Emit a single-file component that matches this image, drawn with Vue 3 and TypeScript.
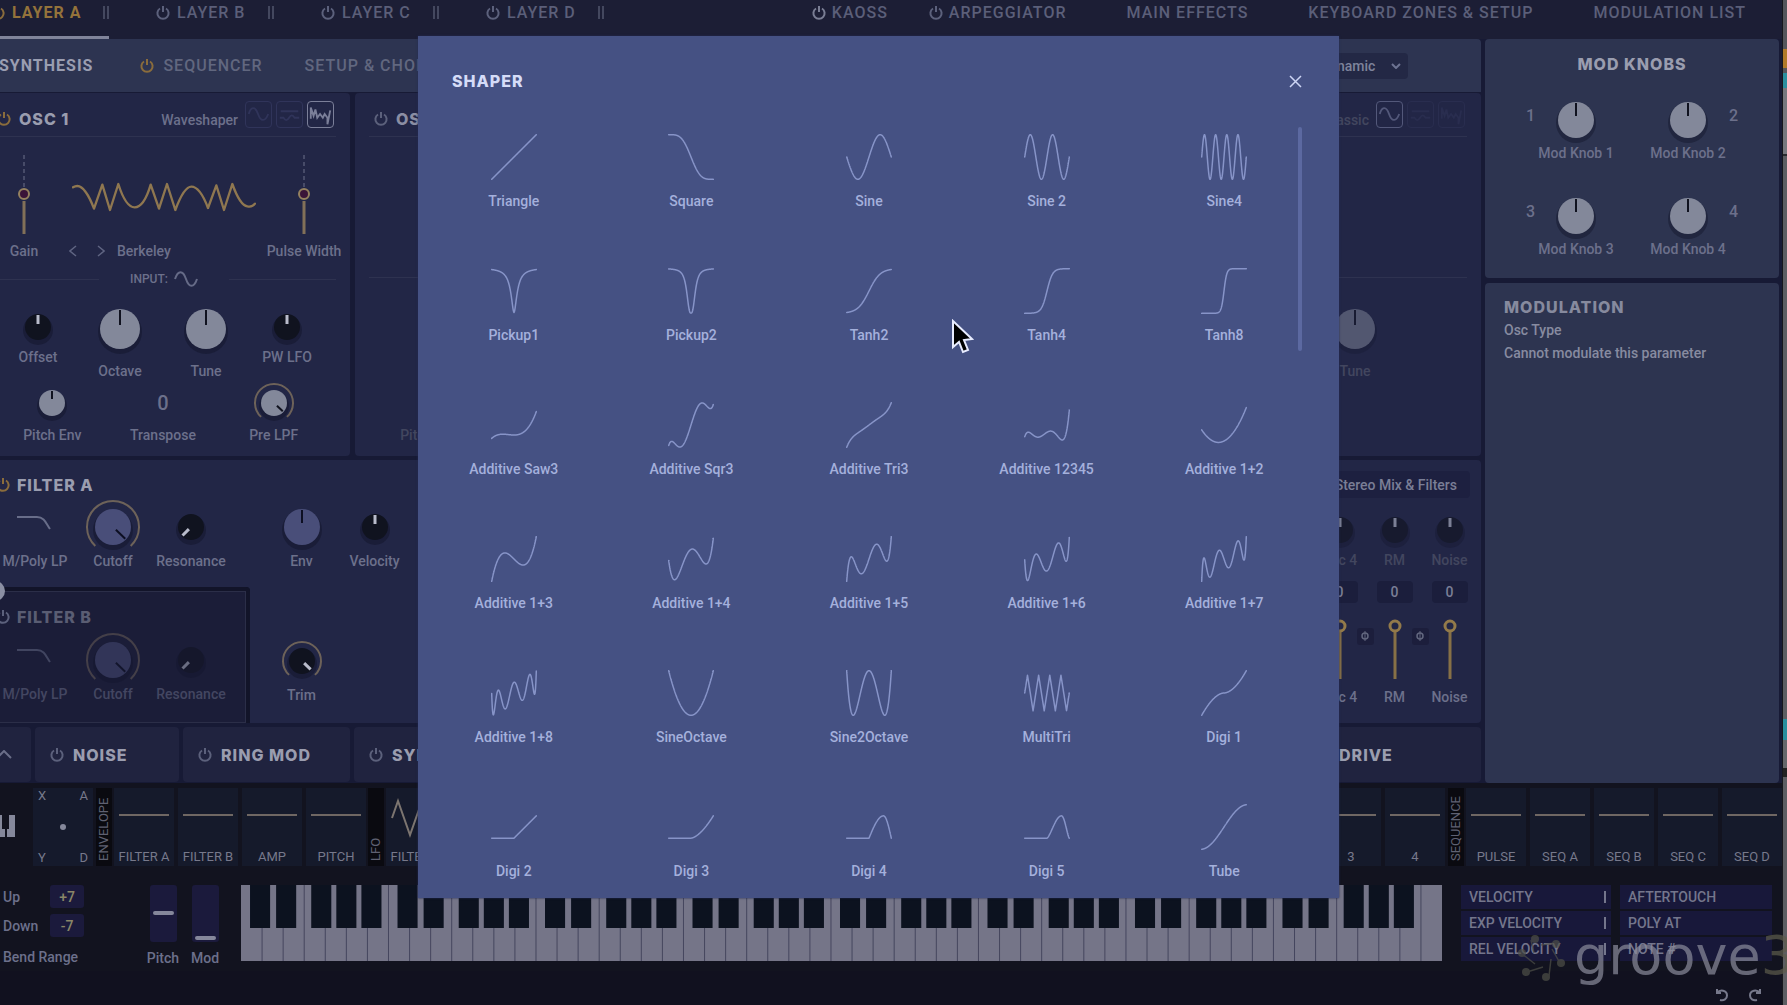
<script setup lang="ts">
import { h, type FunctionalComponent } from 'vue'

type Tone = 'light' | 'dark' | 'violet'
interface KnobProps { r: number; box: number; tone: Tone; turn?: number; ring?: number; label: string }

const tones: Record<Tone, { face: string; mark: string }> = {
  light: { face: '#83889a', mark: '#10121f' },
  dark: { face: '#10131f', mark: '#b9bccb' },
  violet: { face: '#494e79', mark: '#0d0f22' },
}

const Knob: FunctionalComponent<KnobProps> = (p) => {
  const { face, mark } = tones[p.tone]
  const a = p.ring ? p.ring * 0.68 : 0
  const b = p.ring ? p.ring * 0.73 : 0
  return h('svg', {
    width: p.box, height: p.box, viewBox: `${-p.box / 2} ${-p.box / 2} ${p.box} ${p.box}`,
    overflow: 'visible', role: 'slider', 'aria-label': p.label, 'aria-valuenow': p.turn ?? 0,
  }, [
    h('circle', { cy: 3, r: p.r + 2, fill: '#0b0d20', 'fill-opacity': 0.35 }),
    h('circle', { r: p.r, fill: face }),
    p.ring ? h('path', { d: `M${-a} ${b}A${p.ring} ${p.ring} 0 1 1 ${a} ${b}`, fill: 'none', stroke: '#6d6259', 'stroke-width': 2 }) : null,
    h('path', { d: `M0 ${-p.r + 1}V${p.tone === 'dark' ? -3 : -4}`, stroke: mark, 'stroke-width': p.tone === 'dark' ? 3 : 2, transform: `rotate(${p.turn ?? 0})` }),
  ])
}
Knob.props = ['r', 'box', 'tone', 'turn', 'ring', 'label']

const Power: FunctionalComponent<{ color: string }> = (p) =>
  h('svg', { width: 14, height: 16, viewBox: '0 0 14 16', 'aria-hidden': 'true', fill: 'none', stroke: p.color, 'stroke-width': 2 }, [
    h('path', { d: 'M4 3.5A5.6 5.6 0 1 0 10 3.5M7 1V7' }),
  ])
Power.props = ['color']

const dim = '#5c617c'
const amber = '#8a6c3c'

const layers = ['LAYER A', 'LAYER B', 'LAYER C', 'LAYER D']
const pages = ['MAIN EFFECTS', 'KEYBOARD ZONES & SETUP', 'MODULATION LIST']

const boxIcons = [
  'M3 13C5 5 10 4 13 13C16 22 21 21 24 13',
  'M3 17H7Q10 22 13 17T19 17H24M4 10H23',
  'M3 18V6L6 15L8 8L10 17L13 13L16 17L18 13L21 17V24L24 9',
]
const oscs = [
  { name: 'OSC 1', type: 'Waveshaper', active: 2 },
  { name: 'OSC 2', type: 'Classic', active: 0 },
  { name: 'OSC 3', type: 'Classic', active: 0 },
  { name: 'OSC 4', type: 'Classic', active: 0 },
]
const filters = [
  { name: 'FILTER A', on: true },
  { name: 'FILTER B', on: false },
]
const mixColumns = ['Osc 4', 'RM', 'Noise']
const envelopes = ['FILTER A', 'FILTER B', 'AMP', 'PITCH']
const sequences = ['PULSE', 'SEQ A', 'SEQ B', 'SEQ C', 'SEQ D']
const sources = ['VELOCITY', 'AFTERTOUCH', 'EXP VELOCITY', 'POLY AT', 'REL VELOCITY', 'NOTE #']

const blackKeys = Array.from({ length: 8 }, (_, o) => [9, 35, 70, 95, 120].map((x) => o * 147 + x)).flat()

/* Transfer curves over x in [-1, 1] */
type Curve = (x: number) => number
const cheb = (n: number, x: number) => Math.cos(n * Math.acos(Math.max(-1, Math.min(1, x))))
const plus = (n: number): Curve => (x) => (x + cheb(n, x)) / 2
const tri = (x: number) => (2 / Math.PI) * Math.asin(Math.sin(x))
/* Half-cycle hump from x = start to 1, with its peak at x = 0.65 */
const hump = (x: number, start: number) => {
  if (x <= start) return 0
  const u = x < 0.65 ? (x - start) / (0.65 - start) / 2 : 0.5 + (x - 0.65) / 0.7
  return Math.max(0, Math.sin(Math.PI * u))
}
const curves: [string, Curve][] = [
  ['Triangle', (x) => x],
  ['Square', (x) => -Math.sin((Math.PI / 2) * Math.sin((Math.PI / 2) * x))],
  ['Sine', (x) => Math.sin(Math.PI * x)],
  ['Sine 2', (x) => Math.sin(2 * Math.PI * x)],
  ['Sine4', (x) => Math.sin(4 * Math.PI * x)],
  ['Pickup1', (x) => 1 - 2 / (1 + Math.pow(6 * Math.abs(x), 1.8))],
  ['Pickup2', (x) => 1 - 2 / (1 + Math.pow(5 * Math.abs(x), 2.8))],
  ['Tanh2', (x) => Math.tanh(2 * x)],
  ['Tanh4', (x) => Math.tanh(4 * x)],
  ['Tanh8', (x) => Math.tanh(8 * x)],
  ['Additive Saw3', (x) => 0.45 * (x + cheb(2, x) / 2 + cheb(3, x) / 3)],
  ['Additive Sqr3', (x) => 1.06 * (x - cheb(3, x) / 3 + cheb(5, x) / 5)],
  ['Additive Tri3', (x) => 0.87 * (x + cheb(3, x) / 9 + cheb(5, x) / 25)],
  ['Additive 12345', (x) => 0.2 * (x + cheb(2, x) + cheb(3, x) + cheb(4, x) + cheb(5, x))],
  ['Additive 1+2', plus(2)],
  ['Additive 1+3', plus(3)],
  ['Additive 1+4', plus(4)],
  ['Additive 1+5', plus(5)],
  ['Additive 1+6', plus(6)],
  ['Additive 1+7', plus(7)],
  ['Additive 1+8', plus(8)],
  ['SineOctave', (x) => cheb(2, x)],
  ['Sine2Octave', (x) => cheb(4, x)],
  ['MultiTri', (x) => 0.8 * tri(4 * Math.PI * x)],
  ['Digi 1', (x) => Math.sign(x) * Math.pow(Math.abs(x), 1.8)],
  ['Digi 2', (x) => Math.max(0, x)],
  ['Digi 3', (x) => Math.pow(Math.max(0, x), 1.6)],
  ['Digi 4', (x) => hump(x, 0)],
  ['Digi 5', (x) => Math.pow(hump(x, 0), 1.4)],
  ['Tube', (x) => Math.sin((Math.PI / 2) * x * 0.96)],
]
const shapes = curves.map(([name, f]) => {
  const n = 400
  const pts = Array.from({ length: n + 1 }, (_, i) => {
    const x = -Math.cos((Math.PI * i) / n)
    return [x, f(x)] as const
  })
  const ys = pts.map((p) => p[1])
  const mid = (Math.max(...ys) + Math.min(...ys)) / 2
  return { name, points: pts.map(([x, y]) => `${(x * 22.3 + 23).toFixed(2)},${(23 - (y - mid) * 22.3).toFixed(2)}`).join(' ') }
})
</script>

<template>
  <div class="screen">
    <div class="app">
      <header class="top">
        <nav class="layers" aria-label="Layers">
          <button v-for="(l, i) in layers" :key="l" class="layer caps" :class="{ active: i === 0 }">
            <Power :color="i === 0 ? amber : dim" /><span>{{ l }}</span><i class="grip"></i>
          </button>
        </nav>
        <nav class="pages" aria-label="Pages">
          <span class="fx">
            <button class="caps page"><Power color="#7a7e94" />KAOSS</button>
            <button class="caps page"><Power :color="dim" />ARPEGGIATOR</button>
          </span>
          <button v-for="p in pages" :key="p" class="caps page">{{ p }}</button>
        </nav>
      </header>

      <main class="body">
        <div class="left">
          <div class="tabs">
            <button class="caps tab current">SYNTHESIS</button>
            <button class="caps tab"><Power :color="amber" />SEQUENCER</button>
            <button class="caps tab">SETUP &amp; CHORDS</button>
            <span class="voice">
              <select aria-label="Voice assignment"><option>Dynamic</option></select>
              <svg width="10" height="6" viewBox="0 0 10 6" fill="none" stroke="#6d7392" stroke-width="2"><path d="M1 1L5 5L9 1" /></svg>
            </span>
          </div>

          <div class="oscs">
            <section v-for="(o, i) in oscs" :key="o.name" class="panel osc" :class="{ off: i > 0 }">
              <header class="osc-head">
                <Power :color="i === 0 ? amber : dim" />
                <h2 class="title">{{ o.name }}</h2>
                <span class="osc-type">{{ o.type }}</span>
                <span class="boxes">
                  <button v-for="(d, k) in boxIcons" :key="k" class="box" :class="{ on: k === o.active }" :aria-label="`Type ${k + 1}`">
                    <svg width="25" height="25" viewBox="0 0 27 27" fill="none" stroke="currentColor" stroke-width="2"><path :d="d" /></svg>
                  </button>
                </span>
              </header>

              <template v-if="i === 0">
                <div class="wave-row">
                  <svg class="side" width="64" height="80" viewBox="0 0 64 80" fill="none" role="slider" aria-label="Gain" aria-valuenow="50">
                    <path d="M32 0V33" stroke="#474b68" stroke-width="2" stroke-dasharray="4 3" /><path d="M32 46V79" stroke="#827058" stroke-width="3" />
                    <circle cx="32" cy="39" r="5" fill="#3a1438" stroke="#94805f" stroke-width="2" />
                  </svg>
                  <svg class="mid" width="184" height="30" viewBox="214 542 552 90" fill="none" stroke="#8f7750" stroke-width="7" stroke-linejoin="round" stroke-linecap="round">
                    <path d="M217 558Q237 545 255 572Q268 590 280 622L305 550L328 626L353 548Q375 618 402 618Q430 618 450 550L475 622L499 548L524 626Q550 556 572 556Q598 556 622 620L647 552L670 626L695 548Q718 612 740 615Q755 618 763 607" />
                  </svg>
                  <svg class="side" width="64" height="80" viewBox="0 0 64 80" fill="none" role="slider" aria-label="Pulse Width" aria-valuenow="50">
                    <path d="M32 0V33" stroke="#474b68" stroke-width="2" stroke-dasharray="4 3" /><path d="M32 46V79" stroke="#827058" stroke-width="3" />
                    <circle cx="32" cy="39" r="5" fill="#3a1438" stroke="#94805f" stroke-width="2" />
                  </svg>
                </div>
                <div class="name-row">
                  <span class="side">Gain</span>
                  <span class="picker">
                    <svg width="36" height="12" viewBox="0 0 36 12" fill="none" stroke="#5f6482" stroke-width="1.5"><path d="M7 1L1 6L7 11M29 1L35 6L29 11" /></svg>
                    Berkeley
                  </span>
                  <span class="side">Pulse Width</span>
                </div>
                <div class="input-row">
                  <hr /><span>INPUT:</span>
                  <svg width="24" height="16" viewBox="0 0 24 16" fill="none" stroke="#666b87" stroke-width="2"><path d="M1 8C4 -1 9 -1 12 8C15 17 20 17 23 8" /></svg>
                  <hr />
                </div>
                <div class="knobs-a">
                  <div class="cell"><Knob :r="13" :box="44" tone="dark" label="Offset" /><span>Offset</span></div>
                  <div class="cell"><Knob :r="20" :box="68" tone="light" label="Octave" /><span>Octave</span></div>
                  <div class="cell"><Knob :r="20" :box="68" tone="light" label="Tune" /><span>Tune</span></div>
                  <div class="cell"><Knob :r="13" :box="44" tone="dark" label="PW LFO" /><span>PW LFO</span></div>
                </div>
                <div class="knobs-b">
                  <div class="cell"><Knob :r="13" :box="48" tone="light" label="Pitch Env" /><span>Pitch Env</span></div>
                  <div class="cell"><b class="zero">0</b><span>Transpose</span></div>
                  <div class="cell"><Knob :r="13" :box="48" tone="light" :turn="133" :ring="19" label="Pre LPF" /><span>Pre LPF</span></div>
                </div>
              </template>
              <template v-else>
                <div class="blank"></div>
                <div class="knobs-two">
                  <div class="cell"><Knob :r="20" :box="68" tone="light" label="Octave" /><span>Octave</span></div>
                  <div class="cell"><Knob :r="20" :box="68" tone="light" label="Tune" /><span>Tune</span></div>
                </div>
                <div class="knobs-b">
                  <div class="cell end"><span>Pitch Env</span></div>
                </div>
              </template>
            </section>
          </div>

          <div class="lower">
            <section class="panel filters">
              <div class="filter-col">
                <div v-for="f in filters" :key="f.name" class="filter" :class="{ second: !f.on }">
                  <header class="filter-head"><Power :color="f.on ? amber : dim" /><h2 class="title">{{ f.name }}</h2></header>
                  <div class="filter-cells">
                    <div class="cell">
                      <svg width="52" height="52" viewBox="0 0 52 52" fill="none" stroke="#686d89" stroke-width="2"><path d="M8 16H28C35 16 37 22 41 28" /></svg>
                      <span>M/Poly LP</span>
                    </div>
                    <div class="cell"><Knob :r="18" :box="52" tone="violet" :turn="134" :ring="26" label="Cutoff" /><span>Cutoff</span></div>
                    <div class="cell"><Knob :r="13" :box="52" tone="dark" :turn="225" label="Resonance" /><span>Resonance</span></div>
                  </div>
                </div>
              </div>
              <div class="env-col">
                <div class="env-cells">
                  <div class="cell"><Knob :r="18" :box="52" tone="violet" label="Env" /><span>Env</span></div>
                  <div class="cell"><Knob :r="13" :box="52" tone="dark" label="Velocity" /><span>Velocity</span></div>
                </div>
                <div class="env-cells">
                  <div class="cell"><Knob :r="13" :box="52" tone="dark" :turn="134" :ring="19" label="Trim" /><span>Trim</span></div>
                </div>
              </div>
              <i class="route"></i>
            </section>
            <section class="panel mix">
              <button class="mix-mode">Stereo Mix &amp; Filters</button>
              <div class="mix-cols">
                <div v-for="(m, i) in mixColumns" :key="m" class="mix-col">
                  <div class="mix-knob"><Knob :r="13" :box="44" tone="dark" :label="m + ' pan'" /></div>
                  <span class="faint">{{ m }}</span>
                  <output class="num">0</output>
                  <svg width="54" height="64" viewBox="0 0 54 64" fill="none" overflow="visible" role="slider" :aria-label="m + ' level'" aria-valuenow="100">
                    <path d="M27 16V63" stroke="#877046" stroke-width="3" /><circle cx="27" cy="10" r="5" stroke="#937a4a" stroke-width="3" />
                    <g v-if="i < 2"><rect x="44" y="12" width="17" height="17" rx="3" fill="#1c1e3c" /><circle cx="52" cy="20" r="3" stroke="#62677f" stroke-width="1.5" /><path d="M52 15V25" stroke="#62677f" /></g>
                  </svg>
                  <span>{{ m }}</span>
                </div>
              </div>
            </section>
          </div>

          <div class="modules">
            <section class="panel module caret">
              <svg width="16" height="9" viewBox="0 0 16 9" fill="none" stroke="#6a6e88" stroke-width="2"><path d="M1 8L8 1L15 8" /></svg>
            </section>
            <section class="panel module noise"><Power :color="dim" /><h2 class="title">NOISE</h2></section>
            <section class="panel module ring"><Power :color="dim" /><h2 class="title">RING MOD</h2></section>
            <section class="panel module sync"><Power :color="dim" /><h2 class="title">SYNC</h2></section>
            <section class="panel module drive"><h2 class="title">DRIVE</h2></section>
          </div>
        </div>

        <aside class="right">
          <section class="card mods">
            <h2 class="title">MOD KNOBS</h2>
            <div class="mod-grid">
              <div v-for="n in 4" :key="n" class="mod" :class="{ flip: n % 2 === 0 }">
                <b>{{ n }}</b>
                <div class="cell"><Knob :r="18" :box="50" tone="light" :label="'Mod Knob ' + n" /><span>Mod Knob {{ n }}</span></div>
              </div>
            </div>
          </section>
          <section class="card info">
            <h2 class="title">MODULATION</h2>
            <p>Osc Type</p>
            <p>Cannot modulate this parameter</p>
          </section>
        </aside>
      </main>

      <div class="strip">
        <div class="group">
          <svg class="piano-icon" width="15" height="22" viewBox="0 0 15 22" fill="#85889b"><path d="M0 0H2V14H5V22H0ZM9 0H15V22H7V14H9Z" /></svg>
          <div class="xy"><span>X</span><span>A</span><i></i><span>Y</span><span>D</span></div>
          <div class="vert">ENVELOPE</div>
          <div v-for="e in envelopes" :key="e" class="slot"><i></i><span>{{ e }}</span></div>
          <div class="vert low">LFO</div>
          <div class="slot">
            <svg width="50" height="40" viewBox="0 0 50 40" fill="none" stroke="#7c7570" stroke-width="2"><path d="M1 20L7 3L19 37L31 3L43 37L49 20" /></svg>
            <span>FILTER A</span>
          </div>
        </div>
        <div class="group">
          <div v-for="n in [3, 4]" :key="n" class="slot"><i></i><span>{{ n }}</span></div>
          <div class="vert">SEQUENCE</div>
          <div v-for="s in sequences" :key="s" class="slot"><i></i><span>{{ s }}</span></div>
        </div>
      </div>

      <div class="play">
        <div class="bend">
          <label for="up">Up</label><input id="up" value="+7" />
          <label for="down">Down</label><input id="down" value="-7" />
          <span class="wide">Bend Range</span>
        </div>
        <div class="wheel"><div class="track"><i></i></div>Pitch</div>
        <div class="wheel mod-wheel"><div class="track"><i></i></div>Mod</div>
        <svg class="piano" viewBox="0 0 1197 76" preserveAspectRatio="none" role="img" aria-label="Keyboard">
          <rect width="1197" height="76" fill="#757588" />
          <path v-for="k in 56" :key="k" :d="`M${k * 21} 0V76`" stroke="#45465e" />
          <rect v-for="x in blackKeys" :key="x" :x="x" y="0" width="20" height="43" fill="#0c121f" />
        </svg>
        <div class="sources">
          <button v-for="(s, i) in sources" :key="s">{{ s }}<i v-if="i % 2 === 0"></i></button>
        </div>
      </div>

      <footer class="foot">
        <button aria-label="Undo"><svg width="14" height="14" viewBox="0 0 14 14" fill="none" stroke="#77798b" stroke-width="2"><path d="M2 1V5H6M2 5C5 1 12 2 12 7.500C12 11 9 13 5 12" /></svg></button>
        <button aria-label="Redo"><svg width="14" height="14" viewBox="0 0 14 14" fill="none" stroke="#77798b" stroke-width="2"><path d="M12 1V5H8M12 5C9 1 2 2 2 7.500C2 11 5 13 9 12" /></svg></button>
      </footer>
    </div>
    <div class="edge"></div>

    <div class="brand">
      <svg width="50" height="50" viewBox="0 0 50 50" fill="#4f5048" stroke="#4f5048">
        <g stroke="none"><circle cx="18" cy="8" r="4" /><circle cx="39" cy="13" r="4" /><circle cx="44" cy="32" r="4" /><circle cx="29" cy="46" r="4" /><circle cx="9" cy="41" r="4" /><circle cx="5" cy="22" r="4" /></g>
        <path d="M14 9L17 22M38 12L24 14M43 32L35 18M32 45L34 28M10 41L26 36M4 22L18 33" fill="none" stroke-width="1.5" />
      </svg>
      <span>groove</span><span class="three">3</span>
    </div>

    <div class="dialog" role="dialog" aria-labelledby="dlg">
      <header class="dlg-head">
        <h1 id="dlg" class="title">SHAPER</h1>
        <button aria-label="Close"><svg width="13" height="13" viewBox="0 0 13 13" fill="none" stroke="#cdd5f5" stroke-width="1.500"><path d="M1 1L12 12M12 1L1 12" /></svg></button>
      </header>
      <div class="shapes">
        <button v-for="s in shapes" :key="s.name" class="shape">
          <svg width="46" height="46" viewBox="0 0 46 46" fill="none" stroke="#8794c8" stroke-width="1.500" stroke-linecap="round" stroke-linejoin="round"><polyline :points="s.points" /></svg>
          <span>{{ s.name }}</span>
        </button>
      </div>
      <i class="thumb"></i>
    </div>

    <svg class="pointer" width="23" height="36" viewBox="0 0 23 36" aria-hidden="true">
      <path d="M2 2V28L8 23L12 33L17 31L13 21L21 20Z" fill="#000" stroke="#e8ecff" stroke-width="2" />
    </svg>
  </div>
</template>

<style>
body { margin: 0; background: #11121f; }
</style>

<style scoped>
.screen { position: relative; display: flex; min-height: 100vh; overflow: hidden; font: 500 14px/16px Roboto, sans-serif; color: #6c708b; }
.screen * { box-sizing: border-box; }
button { padding: 0; border: 0; background: none; font: inherit; color: inherit; white-space: nowrap; }
svg { display: block; flex: none; }
.title { margin: 0; font: 800 16px/20px Inter, sans-serif; letter-spacing: 1px; color: #9a9daf; white-space: nowrap; }
.caps { font-size: 16px; line-height: 20px; letter-spacing: 1px; }
.app { flex: 1; min-width: 0; display: flex; flex-direction: column; background: #12131f; overflow: hidden; }
.edge { width: 5px; border-left: 1px solid #17171c; background: linear-gradient(#55565c 0 49px, #b07a2a 49px 68px, #55565c 68px 73px, #2a8f9f 73px 88px, #77787e 88px 154px, #2a2a2e 154px 156px, #5d5e63 156px 719px, #2a8f9f 719px 740px, #66676b 740px 768px, #222 768px 777px, #5d5e63 777px); }

.top { display: flex; justify-content: space-between; height: 39px; background: #1c1e35; color: #5b5f79; }
.layers { display: flex; gap: 47px; margin-left: -9px; }
.layer { display: flex; gap: 7px; align-items: center; width: 118px; padding-bottom: 14px; }
.layer.active { border-bottom: 3px solid #80849a; padding-bottom: 11px; color: #94733b; font-weight: 700; }
.layer span { flex: 1; text-align: left; }
.grip { width: 6px; height: 13px; border: solid #44485f; border-width: 0 2px; }
.pages { display: flex; gap: 60px; padding: 0 36px 14px 0; align-items: center; }
.fx { display: flex; gap: 41px; }
.page { display: flex; gap: 6px; align-items: center; }

.body { display: flex; gap: 4px; height: 744px; background: #171a35; }
.left { flex: 1; min-width: 0; margin-left: -22px; display: flex; flex-direction: column; gap: 4px; }
.tabs { display: flex; align-items: center; height: 53px; margin-bottom: -3px; padding: 0 73px 0 21px; background: #2d3451; border-radius: 0 4px 0 0; color: #61677f; }
.tab { display: flex; gap: 9px; align-items: center; margin-right: 42px; }
.tab.current { margin-right: 47px; color: #9a9eb1; font-weight: 700; }
.voice { display: flex; align-items: center; margin-left: auto; padding-right: 7px; background: #232845; border-radius: 4px; color: #7e839b; }
.voice select { appearance: none; width: 84px; height: 26px; padding: 0 0 0 14px; border: 0; background: none; font: inherit; color: inherit; }

.panel { background: #222646; border-radius: 4px; }
.oscs { display: grid; grid-template-columns: repeat(4, minmax(0, 1fr)); gap: 5px; }
.osc { height: 363px; padding: 0 14px; }
.osc-head { display: flex; align-items: center; height: 44px; padding: 8px 2px 0 5px; border-bottom: 1px solid #2e3250; }
.osc-head .title { margin-left: 8px; }
.osc-type { margin: 2px 7px 0 auto; }
.boxes { display: flex; gap: 4px; align-self: flex-start; }
.box { display: grid; place-items: center; width: 27px; height: 27px; border: 1px solid #30345a; border-radius: 4px; color: #30345a; }
.box.on { border-color: #7b7f99; color: #7b7f99; }
.off .osc-type, .off .cell span { color: #42465f; }
.off .box { border-color: #292d4f; color: #292d4f; }
.off .box.on { border-color: #53587a; color: #53587a; }
.off .cell svg { opacity: .5; }
.off .title { color: #8b8ea3; }
.wave-row { display: flex; justify-content: space-between; padding-top: 18px; height: 102px; }
.wave-row .mid { margin-top: 27px; }
.name-row { display: flex; height: 24px; align-items: center; }
.side { width: 64px; display: flex; justify-content: center; white-space: nowrap; }
.picker { flex: 1; display: flex; align-items: center; gap: 12px; padding-left: 13px; }
.input-row { display: flex; align-items: center; height: 32px; gap: 6px; font-size: 12px; }
hr { flex: 1; margin: 0; border: 0; border-top: 1px solid #2e3250; }
.input-row hr:first-child { margin-right: 25px; }
.input-row hr:last-child { margin-left: 25px; }
.cell { display: flex; flex-direction: column; align-items: center; white-space: nowrap; }
.knobs-a { display: grid; grid-template-columns: 80px 84px 88px 1fr; align-items: center; padding: 0 12px 0 6px; }
.knobs-a .cell:first-child, .knobs-a .cell:last-child { padding-bottom: 4px; }
.knobs-b { display: grid; grid-template-columns: repeat(3, 1fr); padding: 0 7px 0 5px; height: 64px; }
.zero { height: 48px; font: 500 20px/48px Roboto, sans-serif; }
.blank { height: 141px; border-bottom: 1px solid #2e3250; }
.knobs-two { display: grid; grid-template-columns: 120px 120px; justify-content: center; margin-top: 17px; }
.knobs-b .end { justify-content: flex-end; }

.lower { display: grid; grid-template-columns: minmax(0, 1fr) 560px; gap: 4px; }
.filters { position: relative; display: flex; height: 263px; }
.filter-col { width: 272px; display: flex; flex-direction: column; }
.filter { height: 127px; padding-left: 18px; }
.filter-head { display: flex; align-items: center; gap: 7px; height: 41px; padding: 9px 0 0 0; }
.filter-cells { display: grid; grid-template-columns: repeat(3, 78px); }
.filter.second { height: 136px; border: solid #121429; border-width: 4px 4px 0 0; border-radius: 0 4px 0 0; background: #1b1d38; box-shadow: inset 0 0 0 1px #2b2e48; }
.second .filter-head { height: 43px; padding-top: 8px; }
.filter.second .filter-cells, .filter.second .title { opacity: .5; }
.env-col { padding-left: 15px; }
.env-cells { display: grid; grid-template-columns: repeat(2, 73px); padding-top: 41px; height: 134px; }
.route { position: absolute; left: 7px; top: 121px; width: 20px; height: 20px; border-radius: 50%; background: #8b8fa3; }
.mix { height: 263px; padding: 11px 4px 0 0; display: flex; flex-direction: column; align-items: flex-end; }
.mix-mode { height: 27px; margin-right: 7px; padding: 0 13px; border-radius: 4px; background: #1d2040; color: #7a7e96; }
.mix-cols { display: grid; grid-template-columns: repeat(3, 55px); margin-top: 10px; }
.mix-col { display: flex; flex-direction: column; align-items: center; }
.mix-knob { opacity: .6; }
.faint { color: #42465f; }
.num { width: 36px; margin: 13px 0; border-radius: 4px; background: #1b1e3c; line-height: 22px; text-align: center; color: #7a7e96; }
.mix-col > span:last-child { margin-top: 9px; }

.modules { display: flex; gap: 4px; }
.module { display: flex; align-items: center; gap: 9px; height: 55px; padding-left: 15px; background: #20233f; }
.caret { width: 53px; padding-left: 18px; }
.noise { width: 144px; }
.ring { width: 167px; }
.sync { flex: 1; }
.drive { width: 150px; padding-left: 8px; }

.right { width: 294px; margin-right: 3px; display: flex; flex-direction: column; gap: 5px; }
.card { background: #2d3450; border-radius: 4px; }
.mods { height: 239px; padding-top: 15px; text-align: center; }
.mod-grid { display: grid; grid-template-columns: repeat(2, 112px); justify-content: center; gap: 30px 0; margin-top: 21px; }
.mod { position: relative; display: flex; justify-content: center; }
.mod b { position: absolute; left: 6px; top: 13px; font: 500 16px/16px Roboto, sans-serif; }
.mod.flip b { left: auto; right: 6px; }
.info { height: 500px; padding: 14px 19px; color: #878ba0; }
.info .title { color: #868a9e; }
.info p { margin: 5px 0 7px; }

.strip { display: flex; justify-content: space-between; height: 83px; padding-top: 5px; font-weight: 400; font-size: 13px; color: #77798b; }
.group { display: flex; gap: 4px; height: 78px; }
.piano-icon { margin: 27px 14px 0 0; }
.xy { display: grid; grid-template-columns: 1fr 1fr; width: 60px; padding: 0 5px; background: #151a2c; align-content: space-between; align-items: center; text-align: left; }
.xy span:nth-of-type(even) { text-align: right; }
.xy i { grid-column: 1 / 3; justify-self: center; width: 6px; height: 6px; border-radius: 50%; background: #85889b; }
.vert { width: 16px; margin: 0 -2px 0 -1px; padding-top: 5px; background: #0a0a10; writing-mode: vertical-rl; transform: rotate(180deg); line-height: 16px; color: #5f6172; }
.vert.low { margin-left: -2px; }
.slot { width: 60px; display: flex; flex-direction: column; align-items: center; justify-content: flex-end; background: #151a2b; }
.slot i { width: 50px; height: 2px; margin-bottom: 33px; background: #6f6763; }
.slot svg { margin-bottom: 11px; }
.slot span { margin-bottom: 1px; white-space: nowrap; }

.play { display: flex; align-items: flex-start; height: 105px; padding-top: 19px; }
.bend { display: grid; grid-template-columns: 47px 34px; row-gap: 6px; align-items: center; width: 141px; padding-left: 3px; }
.bend input { width: 34px; height: 23px; padding: 0; border: 0; border-radius: 3px; background: #1b1a3c; font: inherit; color: #8a8668; text-align: center; }
.bend .wide { grid-column: 1 / 3; margin-top: 6px; white-space: nowrap; }
.wheel { width: 44px; display: flex; flex-direction: column; align-items: center; gap: 8px; }
.track { width: 27px; height: 57px; padding: 26px 3px 0; border-radius: 3px; background: #1b1a3c; }
.track i { display: block; height: 4px; border-radius: 2px; background: #85879b; }
.mod-wheel { width: 40px; margin-right: 16px; }
.mod-wheel .track { padding-top: 51px; }
.piano { flex: 1 1 0; min-width: 0; height: 76px; }
.sources { display: grid; grid-template-columns: 150px 152px; gap: 2px 9px; width: 311px; margin: 0 10px 0 19px; color: #74768c; }
.sources button { display: flex; justify-content: space-between; align-items: center; height: 24px; padding: 0 5px 0 8px; background: #18183a; text-align: left; }
.sources i { width: 2px; height: 12px; background: #74768c; }

.foot { display: flex; justify-content: flex-end; gap: 19px; padding: 17px 20px 0 0; flex: 1; background: #11111f; }
.foot button { height: 14px; }

.brand { position: absolute; right: -8px; bottom: 24px; display: flex; align-items: center; font: 54px/50px "DejaVu Sans", sans-serif; color: #8b8c9c; opacity: .7; }
.brand svg { margin: 0 7px 0 0; }
.three { color: #5d5c4c; }

.dialog { position: absolute; left: 418px; right: 448px; top: 36px; padding-bottom: 18px; background: #455183; box-shadow: 0 0 2px #232a52; }
.dlg-head { display: flex; justify-content: space-between; align-items: center; height: 90px; padding: 0 37px 0 34px; }
.dlg-head .title { color: #d5dcf8; }
.shapes { display: grid; grid-template-columns: repeat(5, 1fr); row-gap: 58px; padding: 8px 26px 0 7px; color: #a4b0dc; }
.shape { display: flex; flex-direction: column; align-items: center; gap: 12px; line-height: 18px; }
.thumb { position: absolute; right: 37px; top: 91px; width: 4px; height: 224px; border-radius: 2px; background: #5c69a1; }
.pointer { position: absolute; left: 951px; top: 319px; }
</style>
